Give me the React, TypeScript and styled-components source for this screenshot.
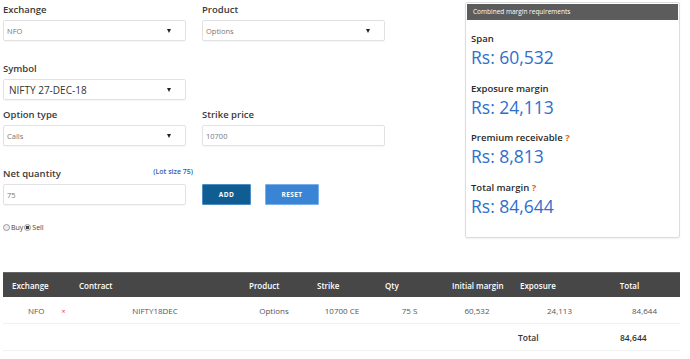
import React from "react";
import styled, { createGlobalStyle } from "styled-components";

const GlobalStyle = createGlobalStyle`
  * { box-sizing: border-box; }
  body {
    margin: 0;
    background: #fff;
    font-family: "Open Sans", "Liberation Sans", sans-serif;
    color: #333;
  }
`;

const cols = "67px 170px 68px 68px 67px 68px 68px 101px";

const App = () => {
  return (
    <Page>
      <GlobalStyle />
      <Top>
        <Form>
          <FieldRow>
            <Field>
              <Label>Exchange</Label>
              <Select>
                <span>NFO</span>
                <Caret />
              </Select>
            </Field>
            <Field>
              <Label>Product</Label>
              <Select>
                <span>Options</span>
                <Caret />
              </Select>
            </Field>
          </FieldRow>

          <FieldRow $top={21}>
            <Field>
              <Label>Symbol</Label>
              <Select $big>
                <span>NIFTY 27-DEC-18</span>
                <Caret />
              </Select>
            </Field>
          </FieldRow>

          <FieldRow $top={8}>
            <Field>
              <Label>Option type</Label>
              <Select>
                <span>Calls</span>
                <Caret />
              </Select>
            </Field>
            <Field>
              <Label>Strike price</Label>
              <Input>10700</Input>
            </Field>
          </FieldRow>

          <FieldRow $top={21}>
            <Field>
              <LabelLine>
                <Label>Net quantity</Label>
                <LotSize>(Lot size 75)</LotSize>
              </LabelLine>
              <Input>75</Input>
            </Field>
            <Buttons>
              <Button $dark>ADD</Button>
              <Button>RESET</Button>
            </Buttons>
          </FieldRow>

          <Radios>
            <Radio />
            <span>Buy</span>
            <Radio $checked />
            <span>Sell</span>
          </Radios>
        </Form>

        <Panel>
          <PanelHead>Combined margin requirements</PanelHead>
          <PanelBody>
            <Stat>
              <StatLabel>Span</StatLabel>
              <StatValue>Rs: 60,532</StatValue>
            </Stat>
            <Stat>
              <StatLabel>Exposure margin</StatLabel>
              <StatValue>Rs: 24,113</StatValue>
            </Stat>
            <Stat>
              <StatLabel>
                Premium receivable <Help>?</Help>
              </StatLabel>
              <StatValue>Rs: 8,813</StatValue>
            </Stat>
            <Stat>
              <StatLabel>
                Total margin <Help>?</Help>
              </StatLabel>
              <StatValue>Rs: 84,644</StatValue>
            </Stat>
          </PanelBody>
        </Panel>
      </Top>

      <Table>
        <HeadRow>
          <Th>Exchange</Th>
          <Th>Contract</Th>
          <Th>Product</Th>
          <Th>Strike</Th>
          <Th>Qty</Th>
          <Th>Initial margin</Th>
          <Th>Exposure</Th>
          <Th $align="center">Total</Th>
        </HeadRow>
        <Row>
          <Td $pad="0 0 0 25px">
            NFO<Remove>×</Remove>
          </Td>
          <Td $align="center">NIFTY18DEC</Td>
          <Td $align="center">Options</Td>
          <Td $align="center">10700 CE</Td>
          <Td $align="center">75 S</Td>
          <Td $align="center">60,532</Td>
          <Td $align="right" $pad="0 7px 0 0">24,113</Td>
          <Td $align="right" $pad="0 23px 0 0">84,644</Td>
        </Row>
        <Row>
          <Td />
          <Td />
          <Td />
          <Td />
          <Td />
          <Td />
          <Td $bold $pad="0 0 0 7px">Total</Td>
          <Td $bold $pad="0 0 0 41px">84,644</Td>
        </Row>
      </Table>
    </Page>
  );
};

export default App;

const Page = styled.div`
  width: 690px;
  padding: 2px 10px 0 3px;
`;

const Top = styled.div`
  display: flex;
  justify-content: space-between;
  align-items: flex-start;
`;

const Form = styled.div`
  width: 382px;
  padding-top: 1px;
`;

const FieldRow = styled.div<{ $top?: number }>`
  display: grid;
  grid-template-columns: 183px 183px;
  column-gap: 16px;
  margin-top: ${(p) => p.$top || 0}px;
`;

const Field = styled.div`
  display: flex;
  flex-direction: column;
`;

const Label = styled.div`
  font-size: 9.5px;
  font-weight: 600;
  line-height: 14px;
  color: #3a3a3a;
  margin-bottom: 3px;
`;

const LabelLine = styled.div`
  display: flex;
  justify-content: space-between;
  align-items: flex-start;
`;

const LotSize = styled.span`
  font-size: 7px;
  font-weight: 600;
  color: #2a63b8;
  line-height: 10px;
  margin-right: -7px;
`;

const Select = styled.div<{ $big?: boolean }>`
  height: 21px;
  border: 1px solid #e2e2e2;
  border-radius: 2px;
  display: flex;
  align-items: center;
  justify-content: space-between;
  padding: 0 14px 0 ${(p) => (p.$big ? 5 : 3)}px;
  font-size: ${(p) => (p.$big ? 10 : 7.5)}px;
  color: ${(p) => (p.$big ? "#333" : "#777")};
  box-shadow: 0 1px 1px rgba(0, 0, 0, 0.04);
`;

const Caret = styled.span`
  width: 0;
  height: 0;
  border-left: 2.5px solid transparent;
  border-right: 2.5px solid transparent;
  border-top: 4px solid #222;
`;

const Input = styled.div`
  height: 21px;
  border: 1px solid #e2e2e2;
  border-radius: 2px;
  display: flex;
  align-items: center;
  padding: 0 3px;
  font-size: 7.5px;
  color: #777;
  box-shadow: 0 1px 1px rgba(0, 0, 0, 0.04);
`;

const Buttons = styled.div`
  display: flex;
  align-items: flex-end;
  gap: 14px;
`;

const Button = styled.button<{ $dark?: boolean }>`
  height: 21px;
  width: ${(p) => (p.$dark ? 49 : 54)}px;
  border: 1px solid ${(p) => (p.$dark ? "#4d8fc4" : "#7ab0ea")};
  border-radius: 1px;
  background: ${(p) => (p.$dark ? "#0f5d92" : "#3a84d6")};
  color: #fff;
  font-family: "Open Sans", "Liberation Sans", sans-serif;
  font-size: 6.5px;
  font-weight: 700;
  letter-spacing: 0.4px;
  padding: 0;
`;

const Radios = styled.div`
  display: flex;
  align-items: center;
  margin-top: 18px;
  font-size: 7px;
  color: #444;
  span {
    margin-right: 1px;
  }
`;

const Radio = styled.span<{ $checked?: boolean }>`
  width: 7px;
  height: 7px;
  border-radius: 50%;
  border: 1px solid #999;
  background: ${(p) =>
    p.$checked ? "radial-gradient(circle, #444 0 1.5px, #eee 2px)" : "#eee"};
  margin-right: 1px;
`;

const Panel = styled.div`
  width: 215px;
  height: 236px;
  border: 1px solid #dcdcdc;
  border-radius: 2px;
  box-shadow: 0 1px 2px rgba(0, 0, 0, 0.06);
`;

const PanelHead = styled.div`
  height: 16px;
  margin: 1px 1px 0;
  background: #5c5c5c;
  color: #fff;
  font-size: 6.5px;
  line-height: 16px;
  padding-left: 6px;
`;

const PanelBody = styled.div`
  padding: 12px 5px 0;
  display: flex;
  flex-direction: column;
  gap: 13.5px;
`;

const Stat = styled.div``;

const StatLabel = styled.div`
  font-size: 9.5px;
  font-weight: 600;
  line-height: 14px;
  color: #2a2a2a;
`;

const Help = styled.span`
  color: #e8602c;
  font-weight: 700;
`;

const StatValue = styled.div`
  font-size: 17.5px;
  line-height: 22px;
  color: #2f6fcc;
`;

const Table = styled.div`
  margin-top: 34px;
  width: 677px;
`;

const HeadRow = styled.div`
  display: grid;
  grid-template-columns: ${cols};
  height: 25px;
  align-items: center;
  background: #474747;
  border-top: 1px solid #666;
`;

const Th = styled.div<{ $align?: string }>`
  font-size: 8px;
  font-weight: 600;
  color: #fff;
  padding-left: ${(p) => (p.$align === "center" ? 0 : 9)}px;
  text-align: ${(p) => p.$align || "left"};
`;

const Row = styled.div`
  display: grid;
  grid-template-columns: ${cols};
  height: 27px;
  align-items: center;
  border-bottom: 1px solid #f1f1f1;
`;

const Td = styled.div<{ $align?: string; $pad?: string; $bold?: boolean }>`
  font-size: ${(p) => (p.$bold ? 8.5 : 8)}px;
  font-weight: ${(p) => (p.$bold ? 600 : 400)};
  color: ${(p) => (p.$bold ? "#333" : "#555")};
  text-align: ${(p) => p.$align || "left"};
  padding: ${(p) => p.$pad || "0"};
`;

const Remove = styled.span`
  color: #e04848;
  font-size: 7px;
  margin-left: 17px;
`;
